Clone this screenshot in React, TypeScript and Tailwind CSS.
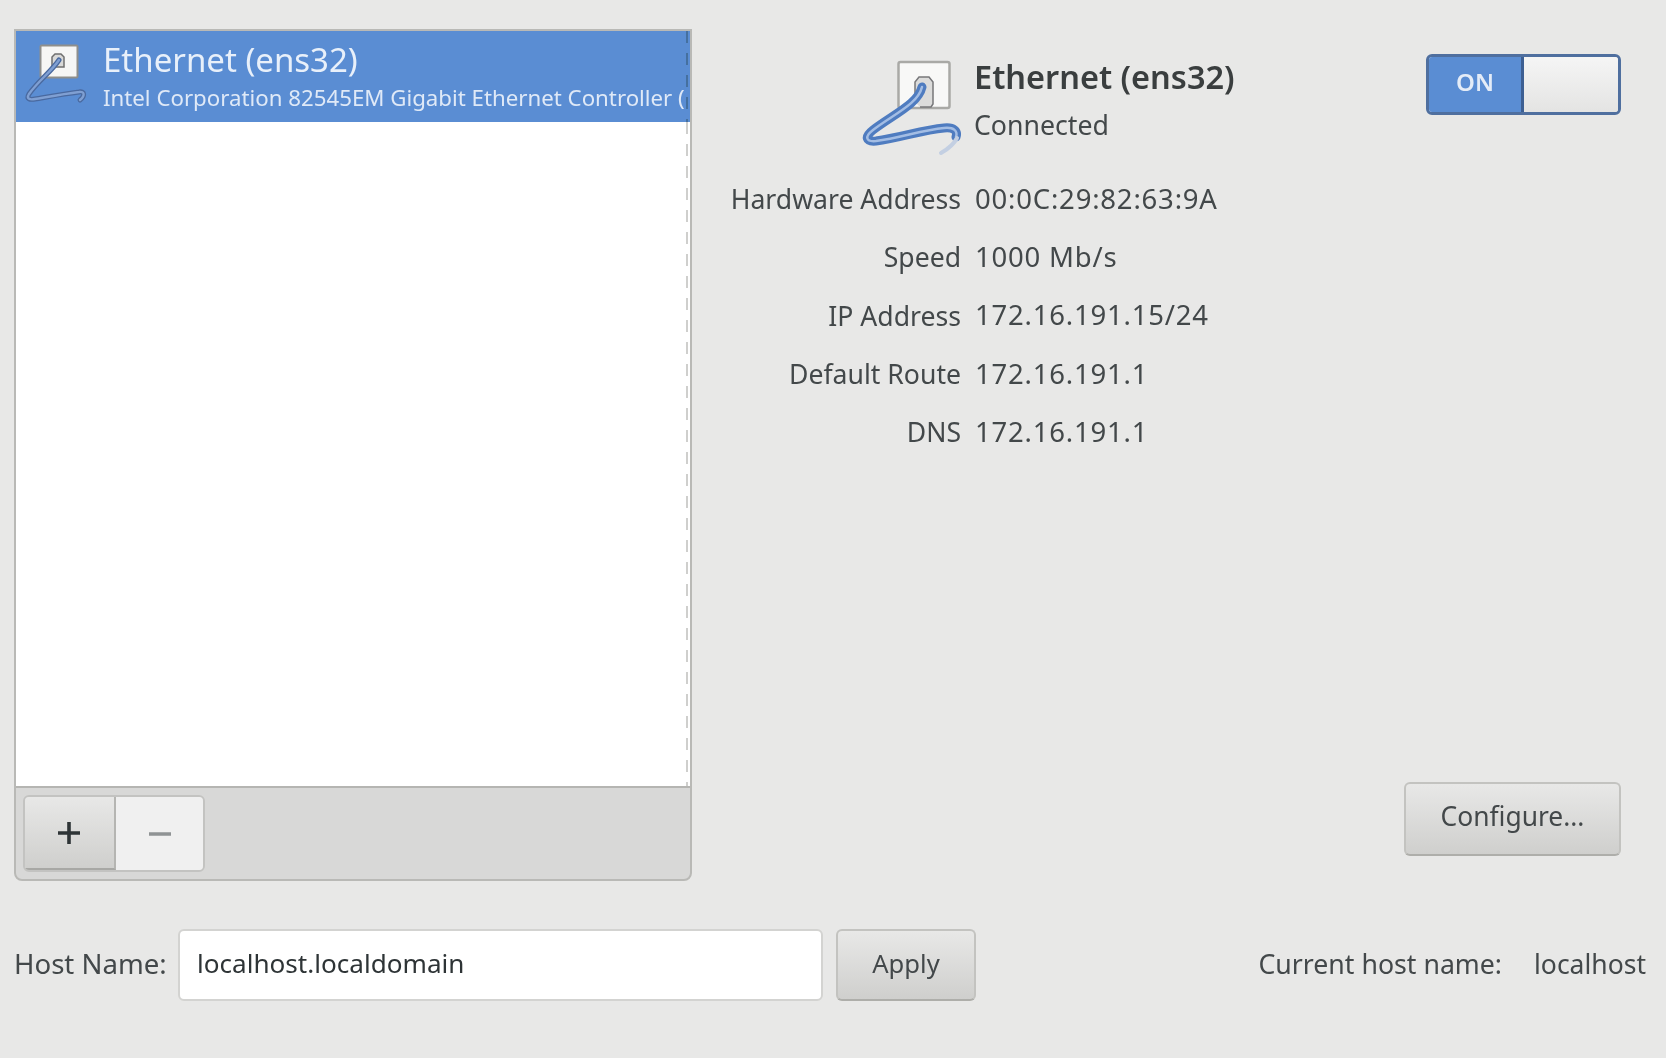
import React from "react";

function WireIcon({ small }: { small?: boolean }) {
  if (small) {
    const d = "M36 16C28 28 16 36 6 50c-3 5 1 6 6 5 12-2 28-5 44-7 6-1 6 4 1 8";
    return (
      <svg width="64" height="66" viewBox="0 0 64 66" className="shrink-0">
        <rect x="17.5" y="1.5" width="37" height="32" rx="1" fill="#f6f6f5" stroke="#8f8f8c" strokeWidth="2" />
        <path d="M29 22v-9l3-3h6l3 3v10h-9" fill="#d9d9d8" stroke="#6f6f6f" strokeWidth="1.5" />
        <path d={d} fill="none" stroke="#49699f" strokeWidth="5" strokeLinecap="round" />
        <path d={d} fill="none" stroke="#7f9fd2" strokeWidth="2.4" strokeLinecap="round" />
      </svg>
    );
  }
  const d = "M60 27C56 44 32 54 11 70c-9 7-7 12 3 11 24-3 46-11 68-13 10-1 14 3 12 9";
  return (
    <svg width="102" height="100" viewBox="0 0 102 100" className="shrink-0">
      <rect x="36.5" y="2" width="51" height="46" rx="2" fill="#f8f8f7" stroke="#a9a9a6" strokeWidth="2.5" />
      <path d="M53 42V22l4-5h10l4 5v22l-2 3H58" fill="#dcdcdb" stroke="#77777a" strokeWidth="1.5" />
      <path d={d} fill="none" stroke="#4f7cc0" strokeWidth="9" strokeLinecap="round" />
      <path d={d} fill="none" stroke="#a3bde4" strokeWidth="2.5" strokeLinecap="round" />
      <path d="M95 78c-3 6-9 11-16 15" fill="none" stroke="#c3cfe2" strokeWidth="4" strokeLinecap="round" />
    </svg>
  );
}

const rows = [
  ["Hardware Address", "00:0C:29:82:63:9A"],
  ["Speed", "1000 Mb/s"],
  ["IP Address", "172.16.191.15/24"],
  ["Default Route", "172.16.191.1"],
  ["DNS", "172.16.191.1"],
];

const fill = "bg-gradient-to-b from-[#e8e8e7] to-[#cfcfcd]";

export default function App() {
  return (
    <div className="w-[1666px] h-[1058px] overflow-hidden bg-[#e8e8e7] text-[#43484a] font-['Noto_Sans',sans-serif] blur-[0.7px] pl-[14px] pr-[45px] pt-[29px] flex flex-col">
      <div className="flex h-[852px]">
        <div className="w-[678px] shrink-0 flex flex-col border-2 border-[#b9b9b6] rounded-b-lg bg-[#d8d8d7] overflow-hidden">
          <div className="h-[91px] bg-[#5a8dd3] flex">
            <div className="flex-1 min-w-0 flex items-center pl-[7px] whitespace-nowrap overflow-hidden">
              <WireIcon small />
              <div className="ml-[16px] flex flex-col">
                <span className="text-[33px] leading-[41px] -mt-[1px] text-[#e8f0fa]">Ethernet (ens32)</span>
                <span className="text-[22.25px] leading-[30px] mt-[3px] text-[#dfe9f7]">Intel Corporation 82545EM Gigabit Ethernet Controller (</span>
              </div>
            </div>
            <div className="w-[2px] bg-[repeating-linear-gradient(to_bottom,#45709f_0_12px,transparent_12px_22px)]" />
            <div className="w-[2px]" />
          </div>
          <div className="h-[664px] bg-white flex">
            <div className="flex-1" />
            <div className="w-[2px] bg-[repeating-linear-gradient(to_bottom,#cfcfcd_0_12px,transparent_12px_22px)]" />
            <div className="w-[2px]" />
          </div>
          <div className="flex-1 border-t-2 border-[#b5b5b2] pl-[7px] pt-[7px]">
            <div className="flex w-[182px] h-[77px] border-2 border-[#c3c3c1] rounded-md overflow-hidden">
              <div className={`w-[91px] border-r-2 border-b-2 border-r-[#b5b5b2] border-b-[#a8a8a5] flex items-center justify-center pr-[2px] ${fill}`}>
                <svg width="22" height="22" viewBox="0 0 22 22"><path d="M0 11h22M11 0v22" stroke="#2e3436" strokeWidth="3.6" /></svg>
              </div>
              <div className="flex-1 bg-[#f0f0f0] flex items-center justify-center">
                <svg width="22" height="6" viewBox="0 0 22 6"><path d="M0 3h22" stroke="#8f9394" strokeWidth="3.4" /></svg>
              </div>
            </div>
          </div>
        </div>

        <div className="flex-1 flex flex-col pb-[25px]">
          <div className="flex h-[128px] pt-[31px] pl-[170px] relative">
            <WireIcon />
            <div className="ml-[10px] flex flex-col">
              <span className="text-[32.5px] leading-[44px] font-semibold text-[#3a3e3f] -mt-[5px]">Ethernet (ens32)</span>
              <span className="text-[26.7px] leading-[40px] mt-[6px]">Connected</span>
            </div>
            <div className="absolute right-[0px] top-[25px] w-[195px] h-[61px] flex border-[3px] border-[#4f6f9f] rounded-md overflow-hidden">
              <div className="w-[95px] bg-[#5a8dd3] border-r-[3px] border-[#3d5f92] flex items-center justify-center pb-[5px] text-[24px] font-semibold text-[#e4ecf7]">ON</div>
              <div className="flex-1 bg-gradient-to-b from-[#f5f5f5] to-[#e4e4e3]" />
            </div>
          </div>
          <div className="pt-[12px] flex flex-col">
            {rows.map(([k, v]) => (
              <div key={k} className="flex h-[58.4px] items-center whitespace-nowrap">
                <span className="w-[269px] text-right text-[26.6px] mt-[3px]">{k}</span>
                <span className="ml-[14px] text-[27.5px] tracking-[0.8px]">{v}</span>
              </div>
            ))}
          </div>
          <div className="flex-1" />
          <div className="flex justify-end">
            <div className={`w-[217px] h-[74px] rounded-md border-2 border-[#c3c3c0] border-b-[#aeaeaa] flex items-center justify-center pb-[4px] text-[26.4px] ${fill}`}>Configure...</div>
          </div>
        </div>
      </div>

      <div className="flex items-center mt-[48px] h-[72px] relative -mr-[25px]">
        <span className="w-[164px] shrink-0 whitespace-nowrap text-[27.6px] pb-[2px]">Host Name:</span>
        <div className="w-[645px] h-[72px] bg-white border-2 border-[#d3d3d1] rounded-md flex items-center pl-[17px] pb-[2px] text-[26.1px] text-[#2e3436]">localhost.localdomain</div>
        <div className={`ml-[13px] w-[140px] h-[72px] rounded-md border-2 border-[#c3c3c0] border-b-[#aeaeaa] flex items-center justify-center pb-[2px] text-[25.6px] ${fill}`}>Apply</div>
        <div className="flex-1" />
        <span className="whitespace-nowrap text-[26.7px] pb-[1px]">Current host name:</span>
        <span className="ml-[32px] text-[26.5px] pb-[1px]">localhost</span>
      </div>
    </div>
  );
}
